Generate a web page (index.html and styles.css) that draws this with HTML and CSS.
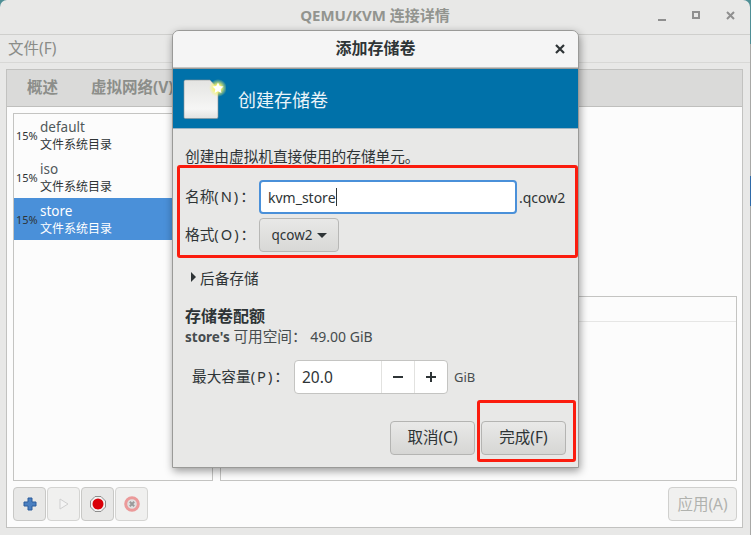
FILE: index.html
```html
<!DOCTYPE html>
<html lang="zh">
<head>
<meta charset="utf-8">
<title>添加存储卷</title>
<link rel="stylesheet" href="styles.css">
</head>
<body>
<div class="window">
  <header class="titlebar">
    <span class="title">QEMU/KVM 连接详情</span>
    <div class="wm">
      <svg width="12" height="12" viewBox="0 0 12 12"><rect x="1" y="9" width="8" height="2" fill="#8f8f8f"/></svg>
      <svg width="12" height="12" viewBox="0 0 12 12"><rect x="2" y="2" width="6" height="6" fill="none" stroke="#8f8f8f" stroke-width="2"/></svg>
      <svg width="12" height="12" viewBox="0 0 12 12"><path d="M2 2l7 7M9 2l-7 7" stroke="#8f8f8f" stroke-width="2"/></svg>
    </div>
  </header>
  <nav class="menubar"><span>文件(F)</span></nav>
  <div class="notebook">
    <div class="tabs"><span class="tab">概述</span><span class="tab">虚拟网络(V)</span></div>
    <div class="page">
      <div class="panes">
        <div class="pool-list">
          <div class="pool"><span class="pct">15%</span><div class="pool-text"><span class="pool-name">default</span><span>文件系统目录</span></div></div>
          <div class="pool"><span class="pct">15%</span><div class="pool-text"><span class="pool-name">iso</span><span>文件系统目录</span></div></div>
          <div class="pool selected"><span class="pct">15%</span><div class="pool-text"><span class="pool-name">store</span><span>文件系统目录</span></div></div>
        </div>
        <div class="detail">
          <div class="detail-top"></div>
          <div class="detail-frame"><div class="detail-head"></div></div>
        </div>
      </div>
      <div class="bottom">
        <div class="tools">
          <button class="tool"><svg width="14" height="14" viewBox="0 0 14 14"><path d="M5 1h4v4h4v4H9v4H5V9H1V5h4z" fill="#4a7fc0" stroke="#2a5c9c"/></svg></button>
          <button class="tool off"><svg width="12" height="14" viewBox="0 0 12 14"><path d="M2 2l8 5-8 5z" fill="#f4f4f4" stroke="#cfcfcf"/></svg></button>
          <button class="tool"><svg width="16" height="16" viewBox="0 0 16 16"><path d="M5 .5h6L15.500 5v6L11 15.500H5L.5 11V5z" fill="#f2f2f2" stroke="#8d8d8d"/><circle cx="8" cy="8" r="5.500" fill="#d90008"/></svg></button>
          <button class="tool off"><svg width="16" height="16" viewBox="0 0 16 16"><circle cx="8" cy="8" r="6.300" fill="#e0e0e0" stroke="#eb9a9a" stroke-width="3"/><path d="M5.800 5.800l4.400 4.400M10.200 5.800l-4.400 4.400" stroke="#9a9a9a" stroke-width="2"/></svg></button>
        </div>
        <button class="apply">应用(A)</button>
      </div>
    </div>
  </div>

  <section class="dialog">
    <header class="dlg-title">
      <span>添加存储卷</span>
      <svg class="dlg-close" width="10" height="10" viewBox="0 0 10 10"><path d="M1 1l8 8M9 1l-8 8" stroke="#2e3436" stroke-width="2.200"/></svg>
    </header>
    <div class="banner">
      <svg class="banner-icon" width="44" height="44" viewBox="0 0 44 44">
        <defs>
          <linearGradient id="paper" x1="0" y1="0" x2="0" y2="1"><stop offset="0" stop-color="#e4e4e2"/><stop offset=".75" stop-color="#f6f6f5"/><stop offset="1" stop-color="#e2e2e0"/></linearGradient>
          <radialGradient id="glow"><stop offset=".35" stop-color="#f8f66a"/><stop offset="1" stop-color="#f8f66a" stop-opacity="0"/></radialGradient>
        </defs>
        <path d="M2 4.500a1.500 1.500 0 0 1 1.500-1.500H28l8 9v28a1.500 1.500 0 0 1-1.500 1.500h-31A1.500 1.500 0 0 1 2 40.500z" fill="url(#paper)" stroke="#8e9296" stroke-width=".6"/>
        <circle cx="36" cy="11" r="9" fill="url(#glow)"/>
        <path d="M36 5.500l1.700 3.500 3.800.5-2.800 2.700.7 3.800-3.400-1.800-3.400 1.800.7-3.800-2.800-2.700 3.800-.5z" fill="#fff"/>
      </svg>
      <span class="banner-text">创建存储卷</span>
    </div>
    <div class="dlg-body">
      <p class="intro">创建由虚拟机直接使用的存储单元。</p>
      <div class="form-grid">
        <label>名称<span class="key">(N)</span><span class="fw">：</span></label>
        <div class="name-row"><div class="entry focus"><span>kvm_store</span><i class="caret"></i></div><span class="suffix">.qcow2</span></div>
        <label>格式<span class="key">(O)</span><span class="fw">：</span></label>
        <div><button class="combo">qcow2<i class="arrow-down"></i></button></div>
      </div>
      <div class="expander"><i class="arrow-right"></i><span>后备存储</span></div>
      <div class="quota">
        <strong class="quota-head">存储卷配额</strong>
        <p class="quota-free"><b>store's</b> <span class="cjk">可用空间<span class="fw">：</span></span> 49.00 GiB</p>
      </div>
      <div class="capacity">
        <label>最大容量<span class="key">(P)</span><span class="fw">：</span></label>
        <div class="spin"><span class="spin-val">20.0</span><span class="spin-btn"><i class="minus"></i></span><span class="spin-btn"><i class="plus"></i></span></div>
        <span class="unit">GiB</span>
      </div>
      <div class="actions">
        <button class="btn">取消(C)</button>
        <button class="btn">完成(F)</button>
      </div>
    </div>
    <div class="mark mark-form"></div>
    <div class="mark mark-finish"></div>
  </section>
</div>
</body>
</html>
```

FILE: styles.css
```css
* { box-sizing: border-box; }
html, body { margin: 0; padding: 0; }
html { background: #e8e8e7; }
body { width: 751px; height: 535px; overflow: hidden; font-family: "Noto Sans", "Noto Sans CJK SC", sans-serif; font-size: 13px; color: #2e3436; background: linear-gradient(#4f8f96 0, #4f8f96 44px, #a8a8a6 44px, #a8a8a6 176px, #2f6aa8 176px, #2f6aa8 206px, #a8a8a6 206px); }
p { margin: 0; }
button { font: inherit; color: inherit; margin: 0; padding: 0; }
i { display: block; }
.fw { font-family: "Noto Sans CJK TC", sans-serif; }
.key { letter-spacing: 2px; }

.window { position: relative; width: 750px; height: 535px; background: #e8e8e7; border-radius: 7px 7px 0 0; display: flex; flex-direction: column; overflow: hidden; }
.titlebar { height: 35px; flex: none; border-bottom: 1px solid #cfcfcd; display: flex; align-items: center; justify-content: center; position: relative; padding-bottom: 5px; }
.title { font-weight: 700; font-size: 15px; color: #92948f; }
.wm { position: absolute; right: 13px; top: 10px; display: flex; gap: 22px; }
.wm svg { display: block; }
.menubar { height: 28px; flex: none; border-bottom: 1px solid #d8d8d6; padding: 0 0 2px 8px; display: flex; align-items: center; color: #8a8c88; font-size: 15.500px; }
.notebook { margin: 6px 7px 7px 6px; flex: 1; border: 1px solid #c2c2c0; display: flex; flex-direction: column; background: #fcfcfc; min-height: 0; }
.tabs { height: 37px; flex: none; background: #dadad9; border-bottom: 1px solid #bfbfbd; display: flex; align-items: center; padding: 0 0 4px 20px; gap: 33px; font-weight: 700; font-size: 15.500px; color: #8c8e8a; }
.page { flex: 1; padding: 6px 5px 6px 6px; display: flex; flex-direction: column; min-height: 0; }
.panes { flex: 1; display: flex; gap: 7px; min-height: 0; }
.pool-list { width: 200px; border: 1px solid #c4c4c2; background: #fcfcfc; flex: none; }
.pool { height: 42px; display: flex; align-items: center; padding-left: 2px; font-size: 12px; color: #2e3436; }
.pool.selected { background: #4a90d9; color: #fff; }
.pool.selected .pct { color: #2e3436; }
.pct { width: 24px; font-size: 11px; flex: none; }
.pool-text { display: flex; flex-direction: column; line-height: 17px; padding-top: 2px; }
.pool-name { font-size: 13.500px; color: #50585a; }
.pool.selected .pool-name { color: #fff; }
.detail { flex: 1; display: flex; flex-direction: column; }
.detail-top { height: 183px; flex: none; }
.detail-frame { flex: 1; border: 1px solid #c4c4c2; }
.detail-head { height: 25px; border-bottom: 1px solid #e6e6e5; }
.bottom { height: 40px; flex: none; padding-top: 6px; display: flex; justify-content: space-between; }
.tools { display: flex; gap: 1px; }
.tool { width: 33px; height: 34px; border: 1px solid #c8c8c6; border-radius: 4px; background: #e8e8e7; display: flex; align-items: center; justify-content: center; }
.tool.off { background: #f0f0ef; border-color: #d4d4d2; }
.tool svg { display: block; }
.apply { width: 69px; height: 34px; border: 1px solid #d0d0ce; border-radius: 4px; background: #f0f0ef; color: #b0b2ae; font-size: 15.500px; padding-bottom: 2px; }

.dialog { position: absolute; left: 172px; top: 30px; width: 407px; height: 438px; background: #e8e8e7; border: 1px solid #9a9a98; border-radius: 7px 7px 0 0; box-shadow: 1px 3px 8px rgba(0,0,0,.4); display: flex; flex-direction: column; }
.dlg-title { height: 37px; flex: none; background: #f5f5f5; border-bottom: 1px solid #c4c4c2; border-radius: 6px 6px 0 0; display: flex; align-items: center; justify-content: center; font-weight: 700; font-size: 16px; position: relative; padding-bottom: 4px; }
.dlg-close { position: absolute; right: 13px; top: 13px; }
.banner { height: 61px; flex: none; background: #0071a9; border-top: 1px solid #9a9a98; border-bottom: 1px solid #9ab4c4; display: flex; align-items: center; padding-left: 9px; color: #fff; }
.banner-icon { display: block; flex: none; }
.banner-text { margin-left: 12px; font-size: 18px; color: #eaf4f9; }
.dlg-body { flex: 1; padding: 17px 12px 0 12px; display: flex; flex-direction: column; font-size: 14px; }
.intro { line-height: 20px; font-size: 14.670px; }
.form-grid { display: grid; grid-template-columns: 74px 1fr; row-gap: 4px; align-items: center; margin-top: 14px; }
.form-grid label { font-size: 14.670px; white-space: nowrap; padding-bottom: 3px; }
.name-row { display: flex; align-items: center; }
.entry { width: 258px; height: 34px; background: #fff; border: 2px solid #4a90d9; border-radius: 4px; display: flex; align-items: center; padding-left: 7px; font-size: 14px; }
.caret { width: 1px; height: 18px; background: #2e3436; }
.suffix { margin-left: 2px; font-size: 14px; }
.combo { width: 80px; height: 34px; border: 1px solid #b8b8b6; border-radius: 4px; background: linear-gradient(#e8e8e7, #d8d8d6); display: flex; align-items: center; justify-content: center; gap: 4px; font-size: 13.500px; }
.arrow-down { width: 0; height: 0; border-left: 5px solid transparent; border-right: 5px solid transparent; border-top: 5px solid #2e3436; }
.expander { display: flex; align-items: center; gap: 4px; margin: 14px 0 0 6px; height: 22px; font-size: 14.670px; }
.arrow-right { width: 0; height: 0; border-top: 5px solid transparent; border-bottom: 5px solid transparent; border-left: 5px solid #2e3436; }
.quota { margin-top: 19px; }
.quota-head { display: block; font-size: 16px; line-height: 19px; }
.quota-free { line-height: 20px; font-size: 14px; color: #464c4e; }
.quota-free b { font-size: 13.500px; }
.cjk { font-size: 14.670px; }
.capacity { display: flex; align-items: center; margin: 13px 0 0 7px; }
.capacity label { width: 102px; font-size: 14.670px; white-space: nowrap; padding-bottom: 3px; }
.spin { width: 154px; height: 34px; background: #fff; border: 1px solid #c4c4c2; border-radius: 4px; display: flex; align-items: center; }
.spin-val { flex: 1; padding-left: 7px; font-size: 15.500px; }
.spin-btn { width: 33px; height: 100%; border-left: 1px solid #e2e2e0; display: flex; align-items: center; justify-content: center; position: relative; }
.minus { width: 10px; height: 2px; background: #2e3436; }
.plus { width: 10px; height: 10px; background: linear-gradient(#2e3436, #2e3436) center/10px 2px no-repeat, linear-gradient(#2e3436, #2e3436) center/2px 10px no-repeat; }
.unit { margin-left: 6px; font-size: 13px; color: #464c4e; }
.actions { margin-top: 27px; display: flex; justify-content: flex-end; gap: 6px; }
.btn { width: 85px; height: 34px; border: 1px solid #b4b4b2; border-radius: 4px; background: linear-gradient(#e9e9e8, #d6d6d4); font-size: 15.500px; padding-bottom: 3px; }

.mark { position: absolute; border: 3px solid #fb1c0e; border-radius: 3px; pointer-events: none; }
.mark-form { left: 4px; top: 134px; width: 401px; height: 93px; }
.mark-finish { left: 304px; top: 369px; width: 99px; height: 62px; }
```
